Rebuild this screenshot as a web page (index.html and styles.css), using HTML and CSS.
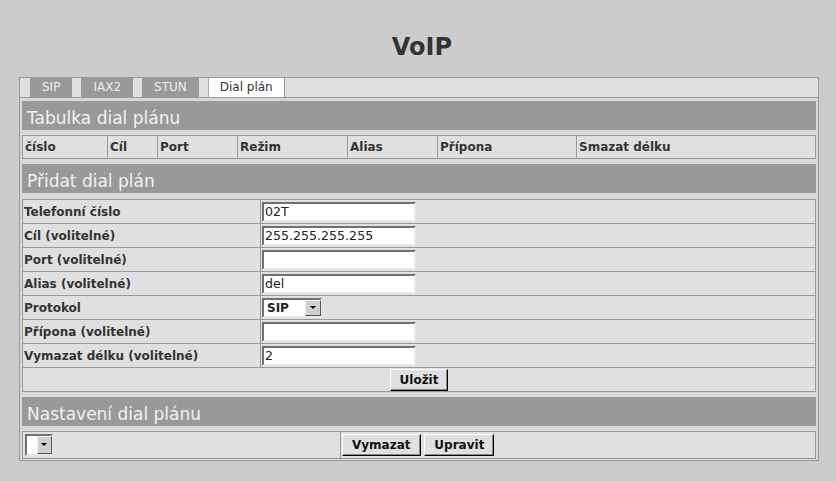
FILE: index.html
```html
<!DOCTYPE html>
<html lang="cs">
<head>
    <meta charset="UTF-8">
    <meta name="viewport" content="width=device-width, initial-scale=1.0">
    <title>VoIP</title>
    <link rel="stylesheet" href="styles.css">
</head>
<body>
    <h1 class="page-title">VoIP</h1>

    <div class="panel">
        <ul class="tabs">
            <li>SIP</li>
            <li>IAX2</li>
            <li>STUN</li>
            <li class="active">Dial plán</li>
        </ul>

        <div class="panel-body">
            <h2 class="section first">Tabulka dial plánu</h2>
            <table class="grid list">
                <colgroup>
                    <col style="width: 85px">
                    <col style="width: 50px">
                    <col style="width: 80px">
                    <col style="width: 110px">
                    <col style="width: 90px">
                    <col style="width: 139px">
                    <col>
                </colgroup>
                <tr>
                    <th>číslo</th>
                    <th>Cíl</th>
                    <th>Port</th>
                    <th>Režim</th>
                    <th>Alias</th>
                    <th>Přípona</th>
                    <th>Smazat délku</th>
                </tr>
            </table>

            <h2 class="section">Přidat dial plán</h2>
            <form id="addDialForm">
                <table class="grid form">
                    <colgroup>
                        <col style="width: 238px">
                        <col>
                    </colgroup>
                    <tr>
                        <td class="label">Telefonní číslo</td>
                        <td><input type="text" value="02T"></td>
                    </tr>
                    <tr>
                        <td class="label">Cíl (volitelné)</td>
                        <td><input type="text" value="255.255.255.255"></td>
                    </tr>
                    <tr>
                        <td class="label">Port (volitelné)</td>
                        <td><input type="text" value=""></td>
                    </tr>
                    <tr>
                        <td class="label">Alias (volitelné)</td>
                        <td><input type="text" value="del"></td>
                    </tr>
                    <tr>
                        <td class="label">Protokol</td>
                        <td>
                            <span class="select">
                                <select>
                                    <option>SIP</option>
                                    <option>IAX2</option>
                                </select>
                                <span class="select-arrow"></span>
                            </span>
                        </td>
                    </tr>
                    <tr>
                        <td class="label">Přípona (volitelné)</td>
                        <td><input type="text" value=""></td>
                    </tr>
                    <tr>
                        <td class="label">Vymazat délku (volitelné)</td>
                        <td><input type="text" value="2"></td>
                    </tr>
                    <tr>
                        <td colspan="2" class="center"><button type="submit">Uložit</button></td>
                    </tr>
                </table>
            </form>

            <h2 class="section">Nastavení dial plánu</h2>
            <table class="grid actions">
                <colgroup>
                    <col style="width: 318px">
                    <col>
                </colgroup>
                <tr>
                    <td>
                        <span class="select small">
                            <select></select>
                            <span class="select-arrow"></span>
                        </span>
                    </td>
                    <td class="buttons">
                        <button type="button">Vymazat</button>
                        <button type="button">Upravit</button>
                    </td>
                </tr>
            </table>
        </div>
    </div>
</body>
</html>
```

FILE: styles.css
```css
body {
    margin: 0;
    background: #ccc;
    color: #333;
    font-family: "DejaVu Sans", Verdana, sans-serif;
    font-size: 12px;
}
.page-title {
    margin: 0 0 16px;
    padding: 33px 0 0 8px;
    line-height: 28px;
    font-size: 24px;
    text-align: center;
    color: #333;
}
.panel {
    width: 800px;
    margin-left: 19px;
    box-sizing: border-box;
    border: 1px solid #999;
    background: #d8d8d8;
    padding-bottom: 1px;
}
.tabs {
    display: flex;
    gap: 9px;
    margin: 0;
    padding: 0 0 0 10px;
    list-style: none;
    height: 19px;
    background: #e0e0e0;
    border-bottom: 1px solid #999;
}
.tabs li {
    padding: 0 12px;
    line-height: 19px;
    background: #999;
    color: #eee;
    font-size: 12px;
}
.tabs li.active {
    background: #fff;
    color: #333;
    padding: 0 11px;
    border-left: 1px solid #aaa;
    border-right: 1px solid #999;
}
.panel-body {
    padding: 0 2px;
}
.section {
    margin: 5px 0 0;
    height: 29px;
    box-sizing: border-box;
    padding: 6px 0 0 5px;
    line-height: 23px;
    font-size: 17px;
    font-weight: normal;
    background: #999;
    color: #f2f2f2;
}
.section.first {
    margin-top: 3px;
}
form {
    margin: 0;
}
.grid {
    width: 100%;
    table-layout: fixed;
    border-collapse: collapse;
    margin-top: 5px;
    background: #e0e0e0;
}
.grid th, .grid td {
    border: 1px solid #999;
    padding: 0 1px;
    font-size: 12px;
    text-align: left;
    vertical-align: middle;
    white-space: nowrap;
}
.list th {
    height: 22px;
    line-height: 22px;
    padding-left: 2px;
    font-weight: bold;
}
.form {
    margin-top: 6px;
}
.form td {
    height: 23px;
    line-height: 14px;
}
.form td.label {
    font-weight: bold;
}
.form td.center {
    text-align: center;
}
.actions td {
    height: 26px;
    line-height: 14px;
}
.actions td.buttons {
    padding-left: 1px;
}
input[type="text"] {
    box-sizing: border-box;
    width: 154px;
    height: 20px;
    margin: 0;
    padding: 0 1px;
    border: 2px solid;
    border-color: #707070 #e8e8e8 #e8e8e8 #707070;
    background: #fff;
    color: #222;
    font-family: "DejaVu Sans", Verdana, sans-serif;
    font-size: 12.6px;
    vertical-align: middle;
    outline: none;
}
.select {
    position: relative;
    display: inline-block;
    vertical-align: middle;
}
.select select {
    appearance: none;
    -webkit-appearance: none;
    box-sizing: border-box;
    width: 60px;
    height: 20px;
    margin: 0;
    padding: 0 0 0 3px;
    border: 2px solid;
    border-color: #707070 #e8e8e8 #e8e8e8 #707070;
    border-radius: 0;
    background: #fff;
    color: #222;
    font-family: "DejaVu Sans", Verdana, sans-serif;
    font-size: 12px;
    font-weight: bold;
    display: block;
}
.select-arrow {
    position: absolute;
    right: 1px;
    top: 2px;
    width: 16px;
    height: 16px;
    box-sizing: border-box;
    background: #d0d0d0;
    border: 1px solid;
    border-color: #f2f2f2 #555 #555 #f2f2f2;
    pointer-events: none;
}
.select-arrow::after {
    content: "";
    position: absolute;
    left: 4px;
    top: 5px;
    border-left: 3px solid transparent;
    border-right: 3px solid transparent;
    border-top: 3px solid #000;
}
.select.small select {
    width: 28px;
    height: 22px;
}
.select.small .select-arrow {
    height: 18px;
    width: 15px;
}
.select.small .select-arrow::after {
    left: 3px;
    top: 6px;
}
.actions td:first-child {
    padding-left: 2px;
}
button {
    box-sizing: border-box;
    height: 22px;
    margin: 0;
    padding: 0 9px;
    border: 1px solid;
    border-color: #fff #000 #000 #fff;
    box-shadow: inset -1px -1px 0 #888;
    background: #e0e0e0;
    color: #111;
    font-family: "DejaVu Sans", Verdana, sans-serif;
    font-size: 12px;
    font-weight: bold;
    vertical-align: middle;
    cursor: pointer;
}
```
